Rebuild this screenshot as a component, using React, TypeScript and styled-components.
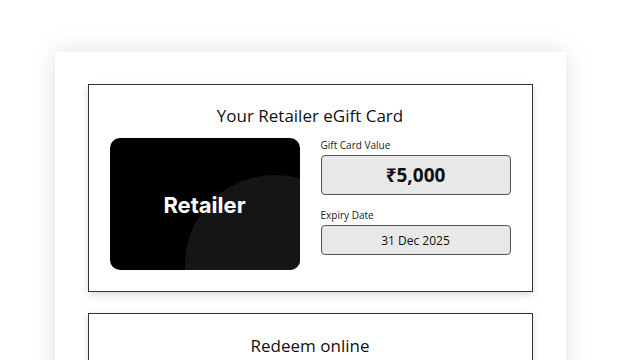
import React from "react";
import styled, { createGlobalStyle } from "styled-components";

const Global = createGlobalStyle`
  html, body { margin: 0; padding: 0; background: #ffffff; }
  body { font-family: "Open Sans", "Noto Sans", sans-serif; color: #111; overflow: hidden; }
  * { box-sizing: border-box; }
`;

const Page = styled.div`
  width: 620px;
  height: 360px;
  overflow: hidden;
  padding-top: 52px;
`;

const Panel = styled.div`
  width: 511px;
  margin: 0 auto;
  background: #fff;
  padding: 32px 33px;
  box-shadow: 0 0 24px rgba(0, 0, 0, 0.12);
  display: flex;
  flex-direction: column;
  gap: 21px;
`;

const Section = styled.section<{ $top?: number }>`
  border: 1px solid #333;
  background: #fff;
  box-shadow: 0 3px 8px rgba(0, 0, 0, 0.14);
  padding: ${(p) => p.$top ?? 19}px 21px 21px;
  display: flex;
  flex-direction: column;
  align-items: center;
`;

const Title = styled.h2`
  margin: 0 0 10px;
  font-family: "Open Sans", "Noto Sans", sans-serif;
  font-size: 17px;
  line-height: 24px;
  font-weight: 500;
  color: #111;
`;

const Row = styled.div`
  display: flex;
  gap: 21px;
  width: 100%;
`;

const Filler = styled.div`
  height: 120px;
`;

const CardArt = styled.div`
  position: relative;
  width: 190px;
  height: 132px;
  border-radius: 10px;
  background: #000;
  overflow: hidden;
  display: flex;
  align-items: center;
  justify-content: center;
  &::after {
    content: "";
    position: absolute;
    left: 75px;
    top: 37px;
    width: 180px;
    height: 180px;
    border-radius: 50%;
    background: #151515;
  }
`;

const Brand = styled.span`
  position: relative;
  z-index: 1;
  color: #fff;
  font-family: Inter, "Noto Sans", sans-serif;
  font-weight: 700;
  font-size: 22px;
  margin-top: 1px;
`;

const Fields = styled.div`
  width: 190px;
  display: flex;
  flex-direction: column;
`;

const Label = styled.div`
  font-size: 10px;
  line-height: 14px;
  color: #222;
  margin-bottom: 3px;
`;

const ValueBox = styled.div<{ $big?: boolean }>`
  height: ${(p) => (p.$big ? 40 : 30)}px;
  border: 1px solid #555;
  border-radius: 4px;
  background: #e8e8e8;
  display: flex;
  align-items: center;
  justify-content: center;
  font-family: "Open Sans", "Noto Sans", sans-serif;
  font-size: ${(p) => (p.$big ? 19 : 12)}px;
  font-weight: ${(p) => (p.$big ? 700 : 500)};
  color: #111;
  margin-bottom: ${(p) => (p.$big ? 13 : 0)}px;
`;

export default function App() {
  return (
    <>
      <Global />
      <Page>
        <Panel>
          <Section>
            <Title>Your Retailer eGift Card</Title>
            <Row>
              <CardArt>
                <Brand>Retailer</Brand>
              </CardArt>
              <Fields>
                <Label>Gift Card Value</Label>
                <ValueBox $big>₹5,000</ValueBox>
                <Label>Expiry Date</Label>
                <ValueBox>31 Dec 2025</ValueBox>
              </Fields>
            </Row>
          </Section>
          <Section $top={20}>
            <Title>Redeem online</Title>
            <Filler />
          </Section>
        </Panel>
      </Page>
    </>
  );
}
